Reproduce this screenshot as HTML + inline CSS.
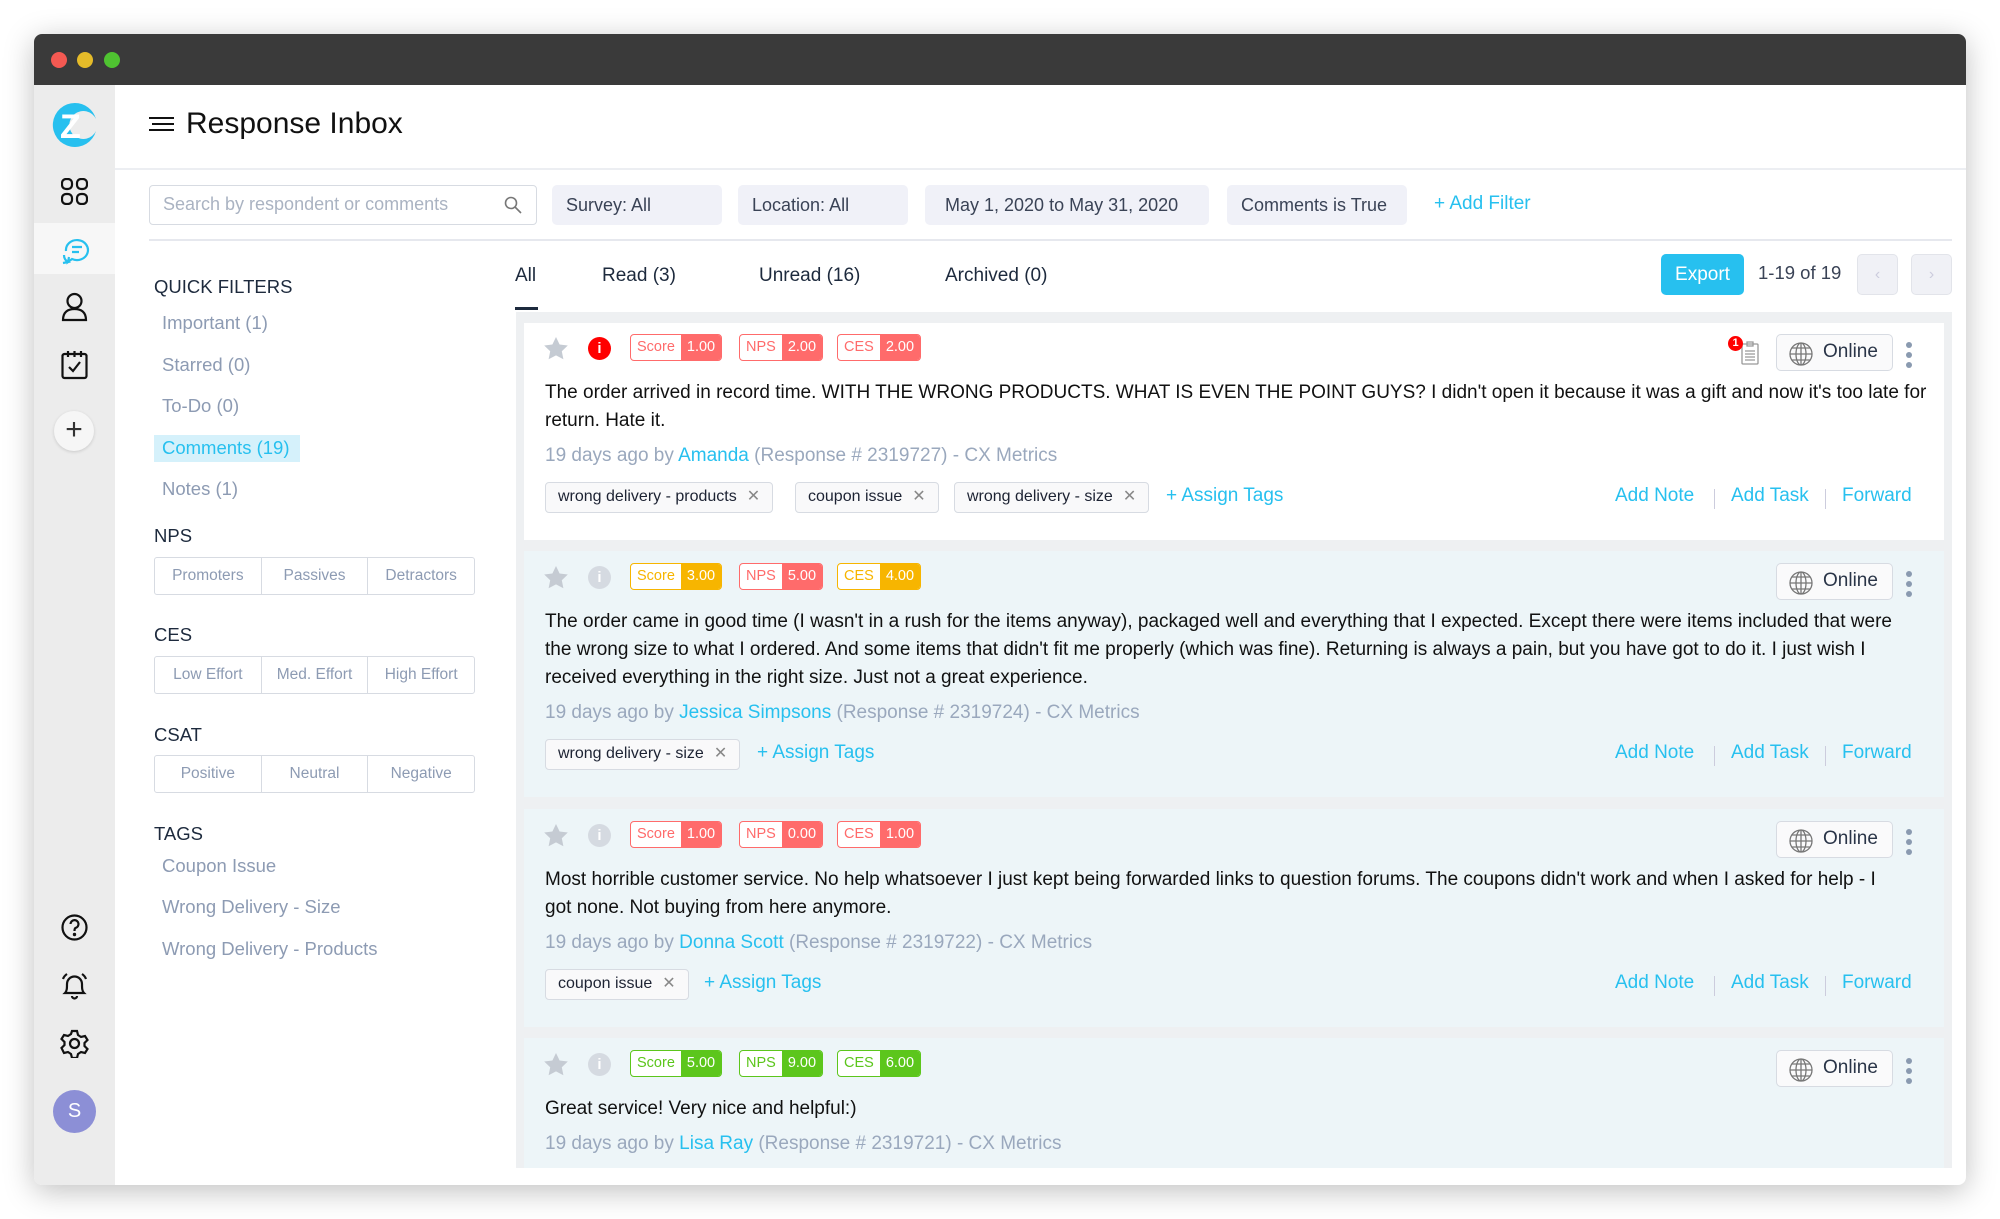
<!DOCTYPE html>
<html><head><meta charset="utf-8"><style>
*{box-sizing:border-box;margin:0;padding:0}
body{width:2000px;height:1219px;background:#fff;font-family:"Liberation Sans",sans-serif;position:relative;overflow:hidden;color:#1d2333}
.a{position:absolute;white-space:nowrap}
.win{position:absolute;left:34px;top:34px;width:1932px;height:1151px;background:#fff;border-radius:8px;box-shadow:0 6px 30px rgba(0,0,0,.25);overflow:hidden}
.fbox{position:absolute;top:185px;height:40px;background:#f0f1f8;border-radius:5px;font-size:18px;color:#3a4356;line-height:40px;padding-left:14px}
.ql{font-size:18.5px;color:#8d9bb3}
.hd{font-size:18.5px;color:#1d2a3d}
.seg{position:absolute;left:154px;width:321px;height:38px;border:1.5px solid #d7dbe2;border-radius:3px;display:flex}
.seg div{flex:1;text-align:center;line-height:35px;font-size:15.5px;color:#8d9bb3;border-right:1.5px solid #d7dbe2}
.seg div:last-child{border-right:none}
.card{position:absolute;left:524px;width:1420px}
.badge{position:absolute;height:27px;border:1.5px solid;border-radius:4px;display:flex;font-size:14.5px;line-height:24px;overflow:hidden;background:#fff}
.badge span{padding:0 6px}
.txt{position:absolute;left:21px;font-size:19px;line-height:28px;color:#111;white-space:nowrap}
.meta{position:absolute;left:21px;font-size:19px;color:#9aa8bd;white-space:nowrap}
.meta b{font-weight:normal;color:#27c0ef}
.tag{position:absolute;height:31px;border:1.5px solid #d7dbe2;border-radius:4px;background:#f9f9fa;font-size:16px;line-height:28px;padding:0 12px;color:#1d2333;white-space:nowrap}
.tag i{font-style:normal;color:#888;margin-left:10px}
.blue{color:#27c0ef;font-size:19px;position:absolute;white-space:nowrap}
.sep{position:absolute;width:1px;height:20px;background:#ccd;}
.online{position:absolute;left:1252px;width:117px;height:37px;border:1.5px solid #d7dbe2;border-radius:5px;background:#fafafb;font-size:19px;color:#2a3548;line-height:34px;padding-left:46px}
.online svg{position:absolute;left:12px;top:7px}
.dots{position:absolute;left:1382px;width:6px}
.dots i{display:block;width:6px;height:6px;border-radius:3px;background:#8a9ab0;margin-bottom:4px}
.star{position:absolute;left:20px}
.info{position:absolute;left:64px;width:23px;height:23px;border-radius:50%;color:#fff;font-size:15px;font-weight:bold;text-align:center;line-height:23px}
.sb svg{position:absolute}
</style></head><body>
<div class="win">
 <div class="a" style="left:0;top:0;width:1932px;height:51px;background:#3a3a3a"></div>
 <div class="a" style="left:17px;top:18px;width:16px;height:16px;border-radius:8px;background:#f45952"></div>
 <div class="a" style="left:43px;top:18px;width:16px;height:16px;border-radius:8px;background:#e5bb29"></div>
 <div class="a" style="left:70px;top:18px;width:16px;height:16px;border-radius:8px;background:#4fc331"></div>
 <div class="a" style="left:0;top:51px;width:81px;height:1100px;background:#ececec"></div>
</div>
<div class="sb">
 <div class="a" style="left:34px;top:223px;width:81px;height:51px;background:#f7f7f7"></div>
 <svg style="left:52px;top:102px" width="46" height="46" viewBox="0 0 46 46"><path d="M23 1a22 22 0 1 0 21 28a14 14 0 1 1 0-12A22 22 0 0 0 23 1z" fill="#27c0ef"/><text x="8" y="36" font-family="Liberation Sans" font-weight="bold" font-size="34" fill="#fff">Z</text></svg>
 <svg style="left:61px;top:178px" width="27" height="27" viewBox="0 0 27 27" fill="none" stroke="#111" stroke-width="2.2"><rect x="1" y="1" width="10" height="10" rx="4"/><rect x="16" y="1" width="10" height="10" rx="4"/><rect x="1" y="16" width="10" height="10" rx="4"/><rect x="16" y="16" width="10" height="10" rx="4"/></svg>
 <svg style="left:60px;top:235px" width="30" height="30" viewBox="0 0 30 30" fill="none" stroke="#27c0ef" stroke-width="2.2"><path d="M6 16a11 10 0 1 1 6 8l-4 3 1-5"/><path d="M4 20a8 8 0 0 0 4 7l-5 1"/><path d="M12 12h10M12 17h7"/></svg>
 <svg style="left:61px;top:292px" width="27" height="30" viewBox="0 0 27 30" fill="none" stroke="#111" stroke-width="2.2"><circle cx="13.5" cy="9" r="7"/><path d="M2 28c0-8 5-11 11.5-11S25 20 25 28z"/></svg>
 <svg style="left:61px;top:350px" width="27" height="30" viewBox="0 0 27 30" fill="none" stroke="#111" stroke-width="2.2"><rect x="1.5" y="4" width="24" height="24" rx="2"/><path d="M7 1v6M13.5 1v6M20 1v6M8 17l4 4 7-9"/></svg>
 <div class="a" style="left:54px;top:411px;width:40px;height:40px;border-radius:20px;background:#f6f6f6;box-shadow:0 1px 3px rgba(0,0,0,.15);text-align:center;line-height:38px;font-size:30px;color:#333;font-weight:300">+</div>
 <svg style="left:61px;top:914px" width="27" height="27" viewBox="0 0 27 27" fill="none" stroke="#111" stroke-width="2.2"><circle cx="13.5" cy="13.5" r="12"/><path d="M9.5 10a4 4 0 1 1 5 4c-1 .5-1 1.5-1 3"/><circle cx="13.5" cy="20.5" r=".6" fill="#111"/></svg>
 <svg style="left:60px;top:972px" width="29" height="28" viewBox="0 0 29 28" fill="none" stroke="#111" stroke-width="2.2"><path d="M5 21c2-2 2-5 2-9a7.5 7.5 0 0 1 15 0c0 4 0 7 2 9z"/><path d="M12 24a2.5 2.5 0 0 0 5 0M3 7a10 10 0 0 1 4-5M26 7a10 10 0 0 0-4-5"/></svg>
 <svg style="left:60px;top:1029px" width="29" height="29" viewBox="0 0 29 29" fill="none" stroke="#111" stroke-width="2.2"><circle cx="14.5" cy="14.5" r="4.5"/><path d="M12 2h5l1 4 3 2 4-1 2.5 4-3 3v3l3 3-2.5 4-4-1-3 2-1 4h-5l-1-4-3-2-4 1L1.5 19l3-3v-3l-3-3L4 6l4 1 3-2z"/></svg>
 <div class="a" style="left:53px;top:1090px;width:43px;height:43px;border-radius:22px;background:#8c8fd6;color:#fff;text-align:center;line-height:43px;font-size:20px">S</div>
</div>
<svg class="a" style="left:149px;top:116px" width="25" height="16" viewBox="0 0 25 16" stroke="#111" stroke-width="2"><path d="M0 2h25M3 8h22M0 14h25"/></svg>
<div class="a" style="left:186px;top:107px;font-size:30px;color:#111">Response Inbox</div>
<div class="a" style="left:115px;top:168px;width:1851px;height:2px;background:#eceef2"></div>
<div class="a" style="left:149px;top:185px;width:388px;height:40px;border:1.5px solid #d7dbe2;border-radius:4px;font-size:18px;color:#aab3c2;line-height:37px;padding-left:13px">Search by respondent or comments</div>
<svg class="a" style="left:504px;top:196px" width="18" height="18" viewBox="0 0 18 18" fill="none" stroke="#777" stroke-width="1.6"><circle cx="7" cy="7" r="5.5"/><path d="M11 11l6 6"/></svg>
<div class="fbox" style="left:552px;width:170px">Survey: All</div>
<div class="fbox" style="left:738px;width:170px">Location: All</div>
<div class="fbox" style="left:925px;width:284px;padding-left:20px">May 1, 2020 to May 31, 2020</div>
<div class="fbox" style="left:1227px;width:180px">Comments is True</div>
<div class="a" style="left:1434px;top:193px;font-size:19px;color:#27c0ef">+ Add Filter</div>
<div class="a" style="left:149px;top:239px;width:1803px;height:2px;background:#e6e8ee"></div>
<div class="a hd" style="left:154px;top:276px">QUICK FILTERS</div>
<div class="a ql" style="left:162px;top:312px">Important (1)</div>
<div class="a ql" style="left:162px;top:354px">Starred (0)</div>
<div class="a ql" style="left:162px;top:395px">To-Do (0)</div>
<div class="a" style="left:154px;top:435px;width:146px;height:27px;background:#d5f1fb"></div>
<div class="a ql" style="left:162px;top:437px;color:#27c0ef">Comments (19)</div>
<div class="a ql" style="left:162px;top:478px">Notes (1)</div>
<div class="a hd" style="left:154px;top:525px">NPS</div>
<div class="seg" style="top:557px"><div>Promoters</div><div>Passives</div><div>Detractors</div></div>
<div class="a hd" style="left:154px;top:624px">CES</div>
<div class="seg" style="top:656px"><div>Low Effort</div><div>Med. Effort</div><div>High Effort</div></div>
<div class="a hd" style="left:154px;top:724px">CSAT</div>
<div class="seg" style="top:755px"><div>Positive</div><div>Neutral</div><div>Negative</div></div>
<div class="a hd" style="left:154px;top:823px">TAGS</div>
<div class="a ql" style="left:162px;top:855px">Coupon Issue</div>
<div class="a ql" style="left:162px;top:896px">Wrong Delivery - Size</div>
<div class="a ql" style="left:162px;top:938px">Wrong Delivery - Products</div>
<div class="a" style="left:515px;top:265px;font-size:19px;color:#1d2a3d">All</div>
<div class="a" style="left:602px;top:265px;font-size:19px;color:#1d2a3d">Read (3)</div>
<div class="a" style="left:759px;top:265px;font-size:19px;color:#1d2a3d">Unread (16)</div>
<div class="a" style="left:945px;top:265px;font-size:19px;color:#1d2a3d">Archived (0)</div>
<div class="a" style="left:515px;top:307px;width:23px;height:3px;background:#1d2a3d"></div>
<div class="a" style="left:1661px;top:254px;width:83px;height:41px;background:#27c0ef;border-radius:5px;color:#fff;font-size:19px;text-align:center;line-height:41px">Export</div>
<div class="a" style="left:1758px;top:262px;font-size:18.5px;color:#3a4356">1-19 of 19</div>
<div class="a" style="left:1857px;top:254px;width:41px;height:41px;background:#f0f1f6;border:1px solid #e2e4ea;border-radius:5px;color:#ccd;text-align:center;line-height:39px">‹</div>
<div class="a" style="left:1911px;top:254px;width:41px;height:41px;background:#f0f1f6;border:1px solid #e2e4ea;border-radius:5px;color:#ccd;text-align:center;line-height:39px">›</div>
<div class="a" style="left:516px;top:312px;width:1436px;height:856px;background:#eef0f2"></div>

<div class="card" style="top:323px;height:217px;background:#fff">
 <svg class="star" style="top:14px" width="24" height="23" viewBox="0 0 24 23"><path d="M12 0l3.6 7.5 8.2 1-6 5.7 1.6 8.1L12 18.4 4.6 22.3l1.6-8.1-6-5.7 8.2-1z" fill="#c5cbd3"/></svg>
 <div class="info" style="top:14px;background:#f00">i</div>
 <div class="badge" style="left:106px;top:11px;border-color:#ff6b6b;color:#ff6b6b"><span>Score</span><span style="background:#ff6b6b;color:#fff">1.00</span></div>
 <div class="badge" style="left:215px;top:11px;border-color:#ff6b6b;color:#ff6b6b"><span>NPS</span><span style="background:#ff6b6b;color:#fff">2.00</span></div>
 <div class="badge" style="left:313px;top:11px;border-color:#ff6b6b;color:#ff6b6b"><span>CES</span><span style="background:#ff6b6b;color:#fff">2.00</span></div>
 <svg class="a" style="left:1217px;top:18px" width="18" height="24" viewBox="0 0 18 24" fill="none" stroke="#999" stroke-width="1.3"><rect x="1" y="3" width="16" height="20" rx="1"/><path d="M6 1h6v4H6zM4 10h10M4 13h10M4 16h10M4 19h10"/></svg>
 <div class="a" style="left:1204px;top:13px;width:15px;height:15px;border-radius:8px;background:#f00;color:#fff;font-size:11px;font-weight:bold;text-align:center;line-height:15px">1</div>
 <div class="online" style="top:11px"><svg width="24" height="24" viewBox="0 0 24 24" fill="none" stroke="#777" stroke-width="1.3"><circle cx="12" cy="12" r="11"/><ellipse cx="12" cy="12" rx="5" ry="11"/><path d="M1 12h22M3 6h18M3 18h18M12 1v22"/></svg>Online</div>
 <div class="dots" style="top:19px"><i></i><i></i><i></i></div>
 <div class="txt" style="top:56px">The order arrived in record time. WITH THE WRONG PRODUCTS. WHAT IS EVEN THE POINT GUYS? I didn't open it because it was a gift and now it's too late for<br>return. Hate it.</div>
 <div class="meta" style="top:122px">19 days ago by <b>Amanda</b> (Response # 2319727) - CX Metrics</div>
 <div class="tag" style="left:21px;top:159px">wrong delivery - products<i>✕</i></div>
 <div class="tag" style="left:271px;top:159px">coupon issue<i>✕</i></div>
 <div class="tag" style="left:430px;top:159px">wrong delivery - size<i>✕</i></div>
 <div class="blue" style="left:642px;top:162px">+ Assign Tags</div>
 <div class="blue" style="left:1091px;top:162px">Add Note</div><div class="sep" style="left:1190px;top:166px"></div>
 <div class="blue" style="left:1207px;top:162px">Add Task</div><div class="sep" style="left:1301px;top:166px"></div>
 <div class="blue" style="left:1318px;top:162px">Forward</div>
</div>

<div class="card" style="top:551px;height:246px;background:#edf5f8">
 <svg class="star" style="top:15px" width="24" height="23" viewBox="0 0 24 23"><path d="M12 0l3.6 7.5 8.2 1-6 5.7 1.6 8.1L12 18.4 4.6 22.3l1.6-8.1-6-5.7 8.2-1z" fill="#c5cbd3"/></svg>
 <div class="info" style="top:15px;background:#d5dae1">i</div>
 <div class="badge" style="left:106px;top:12px;border-color:#f7b500;color:#f7b500"><span>Score</span><span style="background:#f7b500;color:#fff">3.00</span></div>
 <div class="badge" style="left:215px;top:12px;border-color:#ff6b6b;color:#ff6b6b"><span>NPS</span><span style="background:#ff6b6b;color:#fff">5.00</span></div>
 <div class="badge" style="left:313px;top:12px;border-color:#f7b500;color:#f7b500"><span>CES</span><span style="background:#f7b500;color:#fff">4.00</span></div>
 <div class="online" style="top:12px"><svg width="24" height="24" viewBox="0 0 24 24" fill="none" stroke="#777" stroke-width="1.3"><circle cx="12" cy="12" r="11"/><ellipse cx="12" cy="12" rx="5" ry="11"/><path d="M1 12h22M3 6h18M3 18h18M12 1v22"/></svg>Online</div>
 <div class="dots" style="top:20px"><i></i><i></i><i></i></div>
 <div class="txt" style="top:57px">The order came in good time (I wasn't in a rush for the items anyway), packaged well and everything that I expected. Except there were items included that were<br>the wrong size to what I ordered. And some items that didn't fit me properly (which was fine). Returning is always a pain, but you have got to do it. I just wish I<br>received everything in the right size. Just not a great experience.</div>
 <div class="meta" style="top:151px">19 days ago by <b>Jessica Simpsons</b> (Response # 2319724) - CX Metrics</div>
 <div class="tag" style="left:21px;top:188px">wrong delivery - size<i>✕</i></div>
 <div class="blue" style="left:233px;top:191px">+ Assign Tags</div>
 <div class="blue" style="left:1091px;top:191px">Add Note</div><div class="sep" style="left:1190px;top:195px"></div>
 <div class="blue" style="left:1207px;top:191px">Add Task</div><div class="sep" style="left:1301px;top:195px"></div>
 <div class="blue" style="left:1318px;top:191px">Forward</div>
</div>

<div class="card" style="top:809px;height:218px;background:#edf5f8">
 <svg class="star" style="top:15px" width="24" height="23" viewBox="0 0 24 23"><path d="M12 0l3.6 7.5 8.2 1-6 5.7 1.6 8.1L12 18.4 4.6 22.3l1.6-8.1-6-5.7 8.2-1z" fill="#c5cbd3"/></svg>
 <div class="info" style="top:15px;background:#d5dae1">i</div>
 <div class="badge" style="left:106px;top:12px;border-color:#ff6b6b;color:#ff6b6b"><span>Score</span><span style="background:#ff6b6b;color:#fff">1.00</span></div>
 <div class="badge" style="left:215px;top:12px;border-color:#ff6b6b;color:#ff6b6b"><span>NPS</span><span style="background:#ff6b6b;color:#fff">0.00</span></div>
 <div class="badge" style="left:313px;top:12px;border-color:#ff6b6b;color:#ff6b6b"><span>CES</span><span style="background:#ff6b6b;color:#fff">1.00</span></div>
 <div class="online" style="top:12px"><svg width="24" height="24" viewBox="0 0 24 24" fill="none" stroke="#777" stroke-width="1.3"><circle cx="12" cy="12" r="11"/><ellipse cx="12" cy="12" rx="5" ry="11"/><path d="M1 12h22M3 6h18M3 18h18M12 1v22"/></svg>Online</div>
 <div class="dots" style="top:20px"><i></i><i></i><i></i></div>
 <div class="txt" style="top:57px">Most horrible customer service. No help whatsoever I just kept being forwarded links to question forums. The coupons didn't work and when I asked for help - I<br>got none. Not buying from here anymore.</div>
 <div class="meta" style="top:123px">19 days ago by <b>Donna Scott</b> (Response # 2319722) - CX Metrics</div>
 <div class="tag" style="left:21px;top:160px">coupon issue<i>✕</i></div>
 <div class="blue" style="left:180px;top:163px">+ Assign Tags</div>
 <div class="blue" style="left:1091px;top:163px">Add Note</div><div class="sep" style="left:1190px;top:167px"></div>
 <div class="blue" style="left:1207px;top:163px">Add Task</div><div class="sep" style="left:1301px;top:167px"></div>
 <div class="blue" style="left:1318px;top:163px">Forward</div>
</div>

<div class="card" style="top:1038px;height:130px;background:#edf5f8">
 <svg class="star" style="top:15px" width="24" height="23" viewBox="0 0 24 23"><path d="M12 0l3.6 7.5 8.2 1-6 5.7 1.6 8.1L12 18.4 4.6 22.3l1.6-8.1-6-5.7 8.2-1z" fill="#c5cbd3"/></svg>
 <div class="info" style="top:15px;background:#d5dae1">i</div>
 <div class="badge" style="left:106px;top:12px;border-color:#5cc61c;color:#5cc61c"><span>Score</span><span style="background:#5cc61c;color:#fff">5.00</span></div>
 <div class="badge" style="left:215px;top:12px;border-color:#5cc61c;color:#5cc61c"><span>NPS</span><span style="background:#5cc61c;color:#fff">9.00</span></div>
 <div class="badge" style="left:313px;top:12px;border-color:#5cc61c;color:#5cc61c"><span>CES</span><span style="background:#5cc61c;color:#fff">6.00</span></div>
 <div class="online" style="top:12px"><svg width="24" height="24" viewBox="0 0 24 24" fill="none" stroke="#777" stroke-width="1.3"><circle cx="12" cy="12" r="11"/><ellipse cx="12" cy="12" rx="5" ry="11"/><path d="M1 12h22M3 6h18M3 18h18M12 1v22"/></svg>Online</div>
 <div class="dots" style="top:20px"><i></i><i></i><i></i></div>
 <div class="txt" style="top:57px">Great service! Very nice and helpful:)</div>
 <div class="meta" style="top:95px">19 days ago by <b>Lisa Ray</b> (Response # 2319721) - CX Metrics</div>
</div>
</body></html>
